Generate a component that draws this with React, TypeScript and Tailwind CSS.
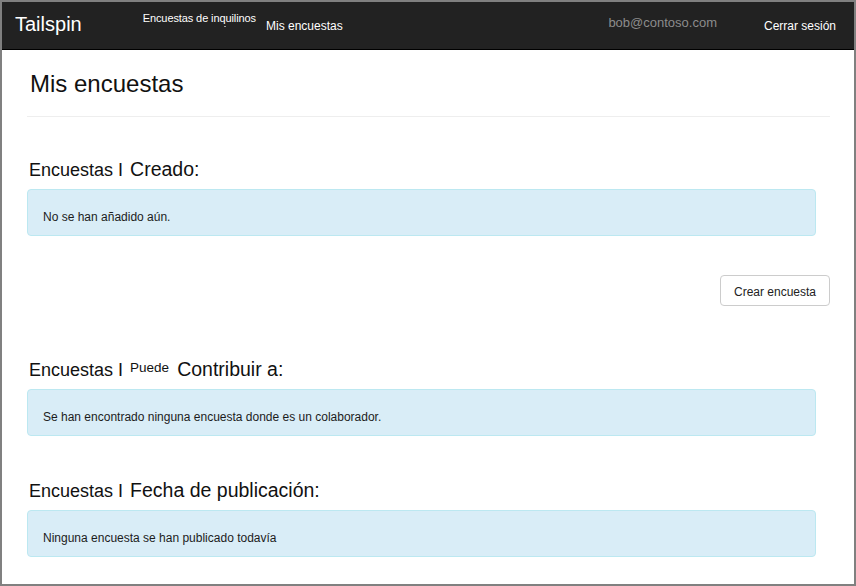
import type { ReactNode } from "react";

function SectionTitle({ children }: { children: ReactNode }) {
  return (
    <h2 className="flex h-[24px] items-baseline pl-[2px] leading-[24px] text-[#111]">
      <span className="text-[18px]">Encuestas</span>
      <span className="ml-[5px] mr-[7px] text-[18px]">I</span>
      {children}
    </h2>
  );
}

function InfoBox({ children }: { children: ReactNode }) {
  return (
    <div className="mr-[14px] mt-[8px] h-[47px] rounded-[4px] border border-[#bce8f1] bg-[#d9edf7] pl-[15px] pt-[20px] text-[12px] leading-[14px] text-[#1c1c1c]">
      {children}
    </div>
  );
}

export default function App() {
  return (
    <div className="w-[856px] h-[586px] overflow-hidden border-2 border-[#808080] bg-white font-['Liberation_Sans',Arial,sans-serif]">
      <header className="flex h-[48px] items-center border-b border-black bg-[#222] text-white">
        <span className="ml-[13px] mb-[3px] text-[20px]">Tailspin</span>
        <span className="relative ml-[61px] mb-[14px] text-[11px] tracking-[-0.1px]">
          Encuestas de inquilinos
          <span className="absolute left-[81px] top-[16px] h-[1px] w-[2px] bg-[#999]" />
        </span>
        <span className="ml-[10px] text-[12px]">Mis encuestas</span>
        <span className="ml-auto mb-[6px] text-[13px] text-[#8c8c8c]">bob@contoso.com</span>
        <span className="ml-[47px] mr-[18px] text-[12px]">Cerrar sesión</span>
      </header>

      <main className="pl-[25px] pr-[24px]">
        <h1 className="mt-[19px] border-b border-[#eee] pb-[17px] pl-[3px] text-[24px] leading-[30px] text-[#111]">
          Mis encuestas
        </h1>

        <div className="mt-[40px]">
          <SectionTitle>
            <span className="text-[19.5px]">Creado:</span>
          </SectionTitle>
          <InfoBox>No se han añadido aún.</InfoBox>
        </div>

        <div className="mt-[39px] flex justify-end">
          <button className="h-[31px] w-[110px] rounded-[4px] border border-[#ccc] bg-white pt-[3px] text-[12px] leading-[14px] text-[#222]">
            Crear encuesta
          </button>
        </div>

        <div className="mt-[51px]">
          <SectionTitle>
            <span className="relative -top-[4px] text-[13.5px]">Puede</span>
            <span className="ml-[8px] text-[19.5px]">Contribuir a:</span>
          </SectionTitle>
          <InfoBox>Se han encontrado ninguna encuesta donde es un colaborador.</InfoBox>
        </div>

        <div className="mt-[42px]">
          <SectionTitle>
            <span className="text-[19.5px]">Fecha de publicación:</span>
          </SectionTitle>
          <InfoBox>Ninguna encuesta se han publicado todavía</InfoBox>
        </div>
      </main>
    </div>
  );
}
